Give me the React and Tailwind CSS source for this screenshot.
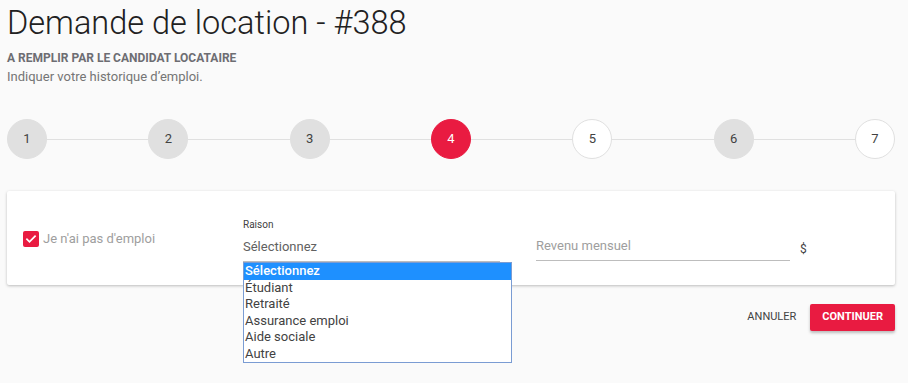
import React from "react";

const steps = [
  { n: 1, state: "done" },
  { n: 2, state: "done" },
  { n: 3, state: "done" },
  { n: 4, state: "active" },
  { n: 5, state: "todo" },
  { n: 6, state: "done" },
  { n: 7, state: "todo" },
];

const options = ["Sélectionnez", "Étudiant", "Retraité", "Assurance emploi", "Aide sociale", "Autre"];

function Step({ n, state }) {
  const cls =
    state === "active"
      ? "bg-[#e91b41] text-white border-[#e91b41]"
      : state === "done"
      ? "bg-[#e0e0e0] text-[#424242] border-[#e0e0e0]"
      : "bg-white text-[#424242] border-[#e0e0e0]";
  return (
    <div className={`relative z-10 w-10 h-10 rounded-full border flex items-center justify-center text-[13px] ${cls}`}>
      {n}
    </div>
  );
}

export default function App() {
  return (
    <div className="min-h-[383px] bg-[#fafafa] pl-[7px] pr-[13px] pt-[3px] text-[#212121]" style={{ fontFamily: "Roboto, 'Liberation Sans', sans-serif" }}>
      <h1 className="text-[32.5px] leading-[40px] font-light text-[#212121]">Demande de location - #388</h1>
      <p className="mt-[7px] text-[12px] font-bold uppercase text-[#6d6d72] leading-[16px]">A remplir par le candidat locataire</p>
      <p className="mt-[2px] text-[13px] text-[#757575] leading-[18px]">Indiquer votre historique d’emploi.</p>

      <div className="relative mt-[33px] flex justify-between items-center">
        <div className="absolute left-0 right-0 top-1/2 h-px bg-[#e0e0e0]" />
        {steps.map((s) => (
          <Step key={s.n} {...s} />
        ))}
      </div>

      <div className="mt-[32px] bg-white rounded-[2px] shadow-[0_1px_3px_rgba(0,0,0,0.25)] h-[94px] flex items-start pl-[16px]">
        <label className="w-[220px] mt-[38px] flex items-center gap-[4px] text-[13px] text-[#9e9e9e]">
          <span className="w-4 h-4 rounded-[2px] bg-[#e91b41] flex items-center justify-center">
            <svg width="12" height="12" viewBox="0 0 24 24" fill="none" stroke="white" strokeWidth="3.5" strokeLinecap="square">
              <path d="M4 12.5l5 5L20 6.5" />
            </svg>
          </span>
          Je n'ai pas d'emploi
        </label>

        <div className="relative w-[257px] mt-[28px]">
          <div className="text-[10px] leading-[12px] text-[#424242]">Raison</div>
          <div className="mt-[2px] text-[13px] leading-[28px] text-[#616161] border-b border-[#bdbdbd]">Sélectionnez</div>
          <ul className="absolute z-20 left-0 top-[43px] w-[269px] bg-white border border-[#7a9cd3] text-[13px] leading-[16.5px] text-[#424242]">
            {options.map((o, i) => (
              <li key={o} className={i === 0 ? "bg-[#1e90ff] text-white font-medium pl-[1px]" : "pl-[1px]"}>
                {o}
              </li>
            ))}
          </ul>
        </div>

        <div className="ml-[36px] w-[254px] mt-[41px] text-[13px] leading-[28px] text-[#9e9e9e] border-b border-[#bdbdbd]">
          Revenu mensuel
        </div>
        <div className="ml-[10px] mt-[49px] text-[12px] text-[#424242]">$</div>
      </div>

      <div className="mt-[19px] flex justify-end items-center gap-[14px]">
        <button className="text-[11px] uppercase text-[#424242] px-0">Annuler</button>
        <button className="h-[27px] px-[12px] bg-[#e91b41] text-white text-[11px] font-bold uppercase rounded-[2px] shadow-[0_2px_3px_rgba(0,0,0,0.25)]">Continuer</button>
      </div>
    </div>
  );
}
